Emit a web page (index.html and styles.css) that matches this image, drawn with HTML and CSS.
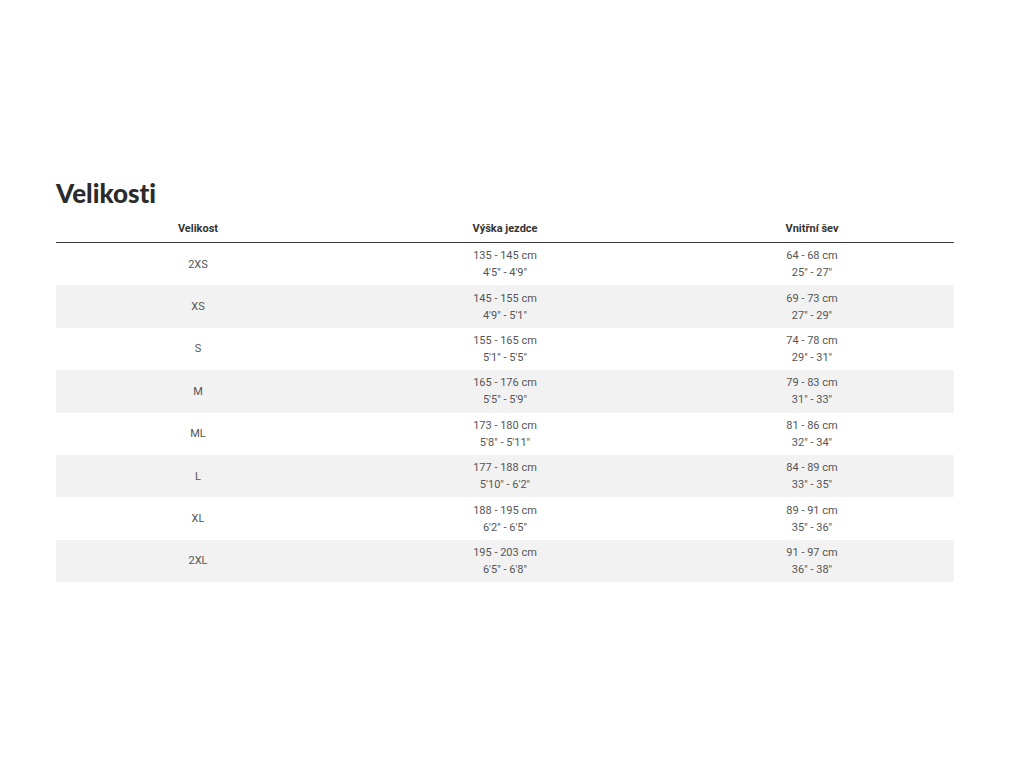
FILE: index.html
```html
<!DOCTYPE html>
<html lang="cs">
<head>
<meta charset="utf-8">
<title>Velikosti</title>
<link rel="stylesheet" href="styles.css">
</head>
<body>
<main class="page">
  <h2 class="title">Velikosti</h2>
  <table class="sizes">
    <colgroup><col class="c1"><col class="c2"><col class="c3"></colgroup>
    <thead>
      <tr><th>Velikost</th><th>Výška jezdce</th><th>Vnitřní šev</th></tr>
    </thead>
    <tbody>
      <tr><td>2XS</td><td>135 - 145 cm<br>4'5" - 4'9"</td><td>64 - 68 cm<br>25" - 27"</td></tr>
      <tr><td>XS</td><td>145 - 155 cm<br>4'9" - 5'1"</td><td>69 - 73 cm<br>27" - 29"</td></tr>
      <tr><td>S</td><td>155 - 165 cm<br>5'1" - 5'5"</td><td>74 - 78 cm<br>29" - 31"</td></tr>
      <tr><td>M</td><td>165 - 176 cm<br>5'5" - 5'9"</td><td>79 - 83 cm<br>31" - 33"</td></tr>
      <tr><td>ML</td><td>173 - 180 cm<br>5'8" - 5'11"</td><td>81 - 86 cm<br>32" - 34"</td></tr>
      <tr><td>L</td><td>177 - 188 cm<br>5'10" - 6'2"</td><td>84 - 89 cm<br>33" - 35"</td></tr>
      <tr><td>XL</td><td>188 - 195 cm<br>6'2" - 6'5"</td><td>89 - 91 cm<br>35" - 36"</td></tr>
      <tr><td>2XL</td><td>195 - 203 cm<br>6'5" - 6'8"</td><td>91 - 97 cm<br>36" - 38"</td></tr>
    </tbody>
  </table>
</main>
</body>
</html>
```
FILE: styles.css
```css
html, body {
  margin: 0;
  padding: 0;
  background: #ffffff;
}
.page {
  padding: 176px 70px 0 56px;
  font-family: Roboto, "Liberation Sans", sans-serif;
}
.title {
  margin: 0 0 5px 0;
  font-family: Lato, "DejaVu Sans", sans-serif;
  font-weight: 900;
  font-size: 26px;
  line-height: 34px;
  color: #2b2b2b;
  letter-spacing: 0;
  font-variant-ligatures: none;
  font-feature-settings: "liga" 0, "dlig" 0;
}
.sizes {
  width: 898px;
  border-collapse: collapse;
  font-size: 11px;
  color: #555;
}
.c1 { width: 284px; }
.c2 { width: 330px; }
.c3 { width: 284px; }
.sizes th {
  font-weight: 700;
  color: #333;
  font-size: 11px;
  line-height: 16px;
  padding: 6px 0 5px;
  border-bottom: 1px solid #3a3a3a;
  text-align: center;
}
.sizes td {
  text-align: center;
  line-height: 17px;
  padding: 4px 0 4px;
  height: 34.4px;
}
.sizes tbody tr:nth-child(even) td {
  background: #f2f2f2;
}
```
